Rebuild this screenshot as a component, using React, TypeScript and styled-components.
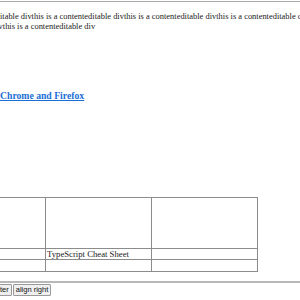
import React from 'react';
import styled, { createGlobalStyle } from 'styled-components';

const GlobalStyle = createGlobalStyle`
  html, body {
    margin: 0;
    padding: 0;
    background: #fff;
    overflow: hidden;
  }
`;

const Page = styled.div`
  width: 700px;
  margin-left: -8px;
  font-family: 'Liberation Serif', 'Times New Roman', serif;
  color: #222;
`;

const Editor = styled.div`
  margin-top: 1px;
  height: 270px;
  padding-top: 9px;
  border-top: 1px solid #a8a8a8;
  border-bottom: 2px solid #b8b8b8;
  font-size: 8.45px;
  line-height: 10px;
`;

const TextLine = styled.div`
  white-space: nowrap;
`;

const LinkBlock = styled.div`
  margin-top: 60px;
  padding-left: 8px;
  font-size: 9.7px;
  line-height: 10px;
  font-weight: bold;
`;

const Link = styled.a`
  color: #1a6fd6;
  text-decoration: underline;
`;

const Table = styled.table`
  margin-top: 96px;
  margin-left: -53px;
  border-collapse: collapse;
  font-size: 8.7px;
`;

const Cell = styled.td<{ $h: number }>`
  width: 104px;
  height: ${(p) => p.$h}px;
  padding: 0 0 0 1px;
  border: 1px solid #8c8c8c;
  vertical-align: middle;
  line-height: 9px;
`;

const Toolbar = styled.div`
  display: flex;
  gap: 1px;
  margin-top: 1px;
  margin-left: -60px;
`;

const Button = styled.button`
  font-family: 'Liberation Sans', Arial, sans-serif;
  font-size: 7.5px;
  line-height: 8px;
  padding: 1px 2px;
  color: #111;
  background: #efefef;
  border: 1px solid #9a9a9a;
  border-radius: 1px;
`;

const rows = [
  { h: 50, cells: ['', '', ''] },
  { h: 10, cells: ['', 'TypeScript Cheat Sheet', ''] },
  { h: 11, cells: ['', '', ''] },
];

export default function App() {
  return (
    <>
      <GlobalStyle />
      <Page>
        <Editor contentEditable suppressContentEditableWarning>
          <TextLine>
            editable divthis is a contenteditable divthis is a contenteditable divthis is a contenteditable divthis is a contenteditable div
          </TextLine>
          <TextLine>divthis is a contenteditable div</TextLine>
          <LinkBlock>
            <Link href="#">Chrome and Firefox</Link>
          </LinkBlock>
          <Table>
            <tbody>
              {rows.map((row, i) => (
                <tr key={i}>
                  {row.cells.map((c, j) => (
                    <Cell key={j} $h={row.h}>{c}</Cell>
                  ))}
                </tr>
              ))}
            </tbody>
          </Table>
        </Editor>
        <Toolbar>
          <Button>align left</Button>
          <Button>align center</Button>
          <Button>align right</Button>
        </Toolbar>
      </Page>
    </>
  );
}
